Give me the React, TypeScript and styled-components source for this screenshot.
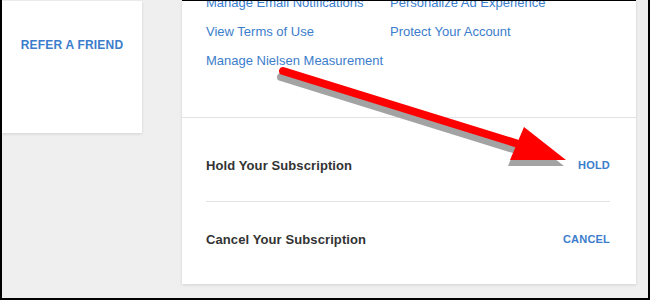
import React from "react";
import styled, { createGlobalStyle } from "styled-components";

const Global = createGlobalStyle`
  html, body { margin: 0; padding: 0; background: #efefef; }
  body { font-family: "Liberation Sans", Arial, sans-serif; }
`;

const Frame = styled.div`
  position: relative;
  width: 650px;
  height: 300px;
  box-sizing: border-box;
  border-left: 2px solid #000;
  border-right: 2px solid #000;
  border-bottom: 2px solid #000;
  background: #efefef;
  overflow: hidden;
  display: flex;
  align-items: flex-start;
  gap: 40px;
`;

const SideCard = styled.div`
  width: 140px;
  height: 132px;
  margin-top: 1px;
  background: #fff;
  box-shadow: 0 1px 3px rgba(0, 0, 0, 0.12);
  display: flex;
  align-items: flex-start;
  justify-content: center;
  padding-top: 37px;
  box-sizing: border-box;
`;

const ActionLink = styled.a<{ $size?: number }>`
  color: #3b7dcc;
  font-weight: 700;
  font-size: ${(p) => p.$size ?? 11}px;
  letter-spacing: 0.2px;
  text-decoration: none;
  line-height: 14px;
`;

const MainCard = styled.div`
  width: 454px;
  height: 284px;
  background: #fff;
  border-top: 1px solid #000;
  box-sizing: border-box;
  box-shadow: 0 1px 3px rgba(0, 0, 0, 0.12);
  display: flex;
  flex-direction: column;
  overflow: hidden;
`;

const LinkGrid = styled.div`
  margin-top: -13px;
  padding: 0 24px;
  display: grid;
  grid-template-columns: 184px 1fr;
  grid-auto-rows: 29px;
  align-items: center;
  height: 129px;
  border-bottom: 1px solid #e3e3e3;
`;

const TextLink = styled.a`
  color: #3b7dcc;
  font-size: 13px;
  text-decoration: none;
  white-space: nowrap;
`;

const Rows = styled.div`
  padding: 0 26px 0 24px;
  display: flex;
  flex-direction: column;
`;

const Row = styled.div<{ $h: number; $line?: boolean; $shift: number }>`
  height: ${(p) => p.$h}px;
  box-sizing: border-box;
  padding-top: ${(p) => Math.max(p.$shift, 0)}px;
  padding-bottom: ${(p) => Math.max(-p.$shift, 0)}px;
  display: flex;
  align-items: center;
  justify-content: space-between;
  border-bottom: ${(p) => (p.$line ? "1px solid #e3e3e3" : "none")};
`;

const Label = styled.span`
  color: #333;
  font-size: 13px;
  font-weight: 700;
  letter-spacing: 0.1px;
`;

const ArrowLayer = styled.svg`
  position: absolute;
  left: 0;
  top: 0;
  pointer-events: none;
`;

function Arrow({ dx, dy, color }: { dx: number; dy: number; color: string }) {
  return (
    <g transform={`translate(${dx} ${dy})`}>
      <line x1="281" y1="71" x2="526" y2="147" stroke={color} strokeWidth="8" strokeLinecap="round" />
      <polygon points="508,160 522,127 564,160" fill={color} />
    </g>
  );
}

export default function App() {
  return (
    <>
      <Global />
      <Frame>
        <SideCard>
          <ActionLink href="#" $size={12}>REFER A FRIEND</ActionLink>
        </SideCard>
        <MainCard>
          <LinkGrid>
            <TextLink href="#">Manage Email Notifications</TextLink>
            <TextLink href="#">Personalize Ad Experience</TextLink>
            <TextLink href="#">View Terms of Use</TextLink>
            <TextLink href="#">Protect Your Account</TextLink>
            <TextLink href="#">Manage Nielsen Measurement</TextLink>
          </LinkGrid>
          <Rows>
            <Row $h={84} $line $shift={11}>
              <Label>Hold Your Subscription</Label>
              <ActionLink href="#">HOLD</ActionLink>
            </Row>
            <Row $h={76} $shift={-2}>
              <Label>Cancel Your Subscription</Label>
              <ActionLink href="#">CANCEL</ActionLink>
            </Row>
          </Rows>
        </MainCard>
        <ArrowLayer width="650" height="300" viewBox="0 0 650 300">
          <Arrow dx={-2} dy={6} color="#a3a3a3" />
          <Arrow dx={0} dy={0} color="#fe0000" />
        </ArrowLayer>
      </Frame>
    </>
  );
}
